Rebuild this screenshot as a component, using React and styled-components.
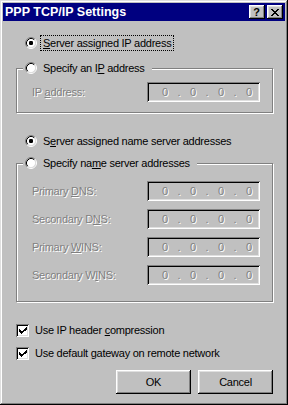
import React from "react";
import styled, { createGlobalStyle } from "styled-components";

const GlobalStyle = createGlobalStyle`
  html, body {
    margin: 0;
    padding: 0;
    background: #c0c0c0;
  }
  body {
    font-family: "Liberation Sans", Arial, sans-serif;
    font-size: 11px;
    color: #000;
  }
`;

const raised = `
  box-shadow: inset -1px -1px #000, inset 1px 1px #fff,
    inset -2px -2px #808080, inset 2px 2px #dfdfdf;
`;

const sunken = `
  box-shadow: inset 1px 1px #808080, inset -1px -1px #fff,
    inset 2px 2px #000, inset -2px -2px #dfdfdf;
`;

const Window = styled.div`
  box-sizing: border-box;
  width: 288px;
  height: 405px;
  padding: 3px;
  background: #c0c0c0;
  box-shadow: inset -1px -1px #000, inset 1px 1px #dfdfdf,
    inset -2px -2px #808080, inset 2px 2px #fff;
  display: flex;
  flex-direction: column;
`;

const TitleBar = styled.div`
  height: 18px;
  background: #000080;
  color: #fff;
  display: flex;
  align-items: center;
  justify-content: space-between;
  padding: 0 2px;
  font-weight: bold;
  font-size: 12.5px;
  letter-spacing: 0;
`;

const TitleButtons = styled.div`
  display: flex;
  gap: 2px;
`;

const TitleButton = styled.div`
  box-sizing: border-box;
  width: 16px;
  height: 14px;
  background: #c0c0c0;
  ${raised}
  display: flex;
  align-items: center;
  justify-content: center;
  color: #000;
  font-size: 11px;
  font-weight: bold;
  line-height: 14px;
  padding-right: 1px;
`;

const Body = styled.div`
  display: flex;
  flex-direction: column;
  padding: 0 12px 0 13px;
  letter-spacing: -0.25px;
`;

const OptionRow = styled.div`
  display: flex;
  align-items: center;
  height: 16px;
  margin-top: ${(p) => p.$top || 0}px;
  padding-left: ${(p) => (p.$indent === undefined ? 9 : p.$indent)}px;
`;

const Caption = styled.span`
  box-sizing: border-box;
  height: 16px;
  line-height: 14px;
  padding: 0 2px;
  margin-left: 3px;
  border: 1px dotted ${(p) => (p.$focused ? "#000" : "transparent")};
  white-space: nowrap;
`;

const Group = styled.fieldset`
  margin: ${(p) => p.$top}px 0 0 0;
  padding: 0;
  min-width: 0;
  border: 1px solid #808080;
  box-shadow: inset 1px 1px #fff, 1px 1px #fff;
`;

const GroupLegend = styled.legend`
  padding: 0 4px 0 0;
  margin-left: 6px;
  background: #c0c0c0;
  position: relative;
`;

const GroupContent = styled.div`
  display: flex;
  flex-direction: column;
  gap: 8px;
  padding: ${(p) => p.$pad};
`;

const FieldRow = styled.div`
  display: flex;
  align-items: center;
  justify-content: space-between;
`;

const Disabled = styled.span`
  color: #808080;
  text-shadow: 1px 1px 0 #fff;
  white-space: nowrap;
`;

const IpField = styled.div`
  box-sizing: border-box;
  width: 113px;
  height: 20px;
  background: #c0c0c0;
  ${sunken}
  display: flex;
  align-items: center;
  padding-left: 7px;
  letter-spacing: 0;
`;

const Octet = styled(Disabled)`
  width: 22px;
  text-align: center;
`;

const Dot = styled(Disabled)`
  width: 6px;
  text-align: center;
`;

const CheckBox = styled.div`
  box-sizing: border-box;
  width: 13px;
  height: 13px;
  background: #fff;
  ${sunken}
  flex-shrink: 0;
  display: flex;
`;

const ButtonBar = styled.div`
  display: flex;
  justify-content: flex-end;
  gap: 7px;
  margin-top: 9px;
`;

const Button = styled.div`
  box-sizing: border-box;
  width: 75px;
  height: 24px;
  background: #c0c0c0;
  ${raised}
  display: flex;
  align-items: center;
  justify-content: center;
`;

function Radio({ checked }) {
  return (
    <svg width="12" height="12" viewBox="0 0 12 12" style={{ flexShrink: 0 }}>
      <circle cx="6" cy="6" r="4.5" fill="#fff" />
      <path d="M2.11 9.89 A5.5 5.5 0 0 1 9.89 2.11" stroke="#808080" fill="none" />
      <path d="M9.89 2.11 A5.5 5.5 0 0 1 2.11 9.89" stroke="#fff" fill="none" />
      <path d="M2.82 9.18 A4.5 4.5 0 0 1 9.18 2.82" stroke="#000" fill="none" />
      <path d="M9.18 2.82 A4.5 4.5 0 0 1 2.82 9.18" stroke="#dfdfdf" fill="none" />
      {checked && <rect x="4" y="4" width="4" height="4" rx="1.2" fill="#000" />}
    </svg>
  );
}

function Check() {
  const rows = [
    [9, 0, 1],
    [8, 1, 2],
    [2, 2, 1],
    [7, 2, 3],
    [2, 3, 2],
    [6, 3, 3],
    [2, 4, 5],
    [3, 5, 3],
    [4, 6, 1],
  ];
  return (
    <svg width="13" height="13" viewBox="0 0 13 13" shapeRendering="crispEdges">
      {rows.map(([x, y, w], i) => (
        <rect key={i} x={x + 1} y={y + 3} width={w} height="1" fill="#000" />
      ))}
    </svg>
  );
}

function CloseGlyph() {
  const rows = [
    [0, 2, 6, 2],
    [1, 2, 5, 2],
    [2, 4],
    [3, 2],
    [2, 4],
    [1, 2, 5, 2],
    [0, 2, 6, 2],
  ];
  return (
    <svg width="8" height="7" viewBox="0 0 8 7" shapeRendering="crispEdges">
      {rows.map((r, y) => (
        <g key={y}>
          <rect x={r[0]} y={y} width={r[1]} height="1" fill="#000" />
          {r.length > 2 && <rect x={r[2]} y={y} width={r[3]} height="1" fill="#000" />}
        </g>
      ))}
    </svg>
  );
}

function Key({ children }) {
  return <u>{children}</u>;
}

function IpAddress() {
  return (
    <IpField>
      <Octet>0</Octet>
      <Dot>.</Dot>
      <Octet>0</Octet>
      <Dot>.</Dot>
      <Octet>0</Octet>
      <Dot>.</Dot>
      <Octet>0</Octet>
    </IpField>
  );
}

const nameServers = [
  ["Primary ", "D", "NS:"],
  ["Secondary D", "N", "S:"],
  ["Primary ", "W", "INS:"],
  ["Secondary W", "I", "NS:"],
];

export default function App() {
  return (
    <>
      <GlobalStyle />
      <Window>
        <TitleBar>
          <span>PPP TCP/IP Settings</span>
          <TitleButtons>
            <TitleButton>?</TitleButton>
            <TitleButton>
              <CloseGlyph />
            </TitleButton>
          </TitleButtons>
        </TitleBar>

        <Body>
          <OptionRow $top={14}>
            <Radio checked />
            <Caption $focused>
              <Key>S</Key>erver assigned IP address
            </Caption>
          </OptionRow>

          <Group $top={9}>
            <GroupLegend>
              <OptionRow $indent={2}>
                <Radio />
                <Caption>
                  Specify an I<Key>P</Key> address
                </Caption>
              </OptionRow>
            </GroupLegend>
            <GroupContent $pad="6px 12px 10px 15px">
              <FieldRow>
                <Disabled>
                  IP <Key>a</Key>ddress:
                </Disabled>
                <IpAddress />
              </FieldRow>
            </GroupContent>
          </Group>

          <OptionRow $top={20}>
            <Radio checked />
            <Caption>
              S<Key>e</Key>rver assigned name server addresses
            </Caption>
          </OptionRow>

          <Group $top={6}>
            <GroupLegend>
              <OptionRow $indent={2}>
                <Radio />
                <Caption>
                  Specify na<Key>m</Key>e server addresses
                </Caption>
              </OptionRow>
            </GroupLegend>
            <GroupContent $pad="10px 12px 16px 15px">
              {nameServers.map(([a, k, b]) => (
                <FieldRow key={a + k + b}>
                  <Disabled>
                    {a}
                    <Key>{k}</Key>
                    {b}
                  </Disabled>
                  <IpAddress />
                </FieldRow>
              ))}
            </GroupContent>
          </Group>

          <OptionRow $top={20} $indent={0}>
            <CheckBox>
              <Check />
            </CheckBox>
            <Caption>
              Use IP header <Key>c</Key>ompression
            </Caption>
          </OptionRow>

          <OptionRow $top={7} $indent={0}>
            <CheckBox>
              <Check />
            </CheckBox>
            <Caption>
              Use default <Key>g</Key>ateway on remote network
            </Caption>
          </OptionRow>

          <ButtonBar>
            <Button>OK</Button>
            <Button>Cancel</Button>
          </ButtonBar>
        </Body>
      </Window>
    </>
  );
}
